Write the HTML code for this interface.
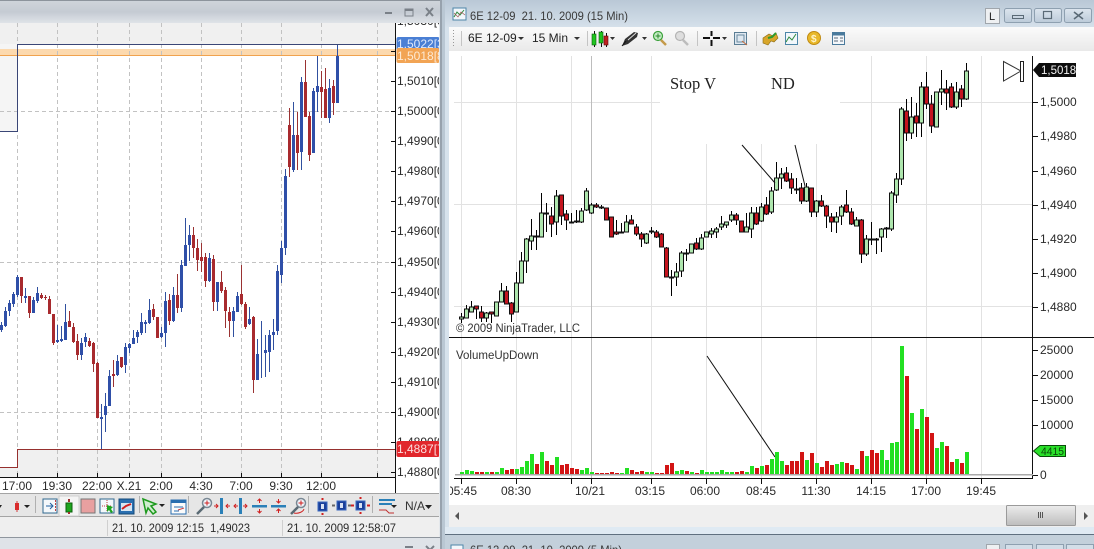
<!DOCTYPE html>
<html>
<head>
<meta charset="utf-8">
<title>Charts</title>
<style>
html,body{margin:0;padding:0;width:1094px;height:549px;overflow:hidden;background:#d6e2ec}
svg{display:block;position:absolute;left:0;top:0}
text{font-family:"Liberation Sans",sans-serif}
</style>
</head>
<body>
<svg width="1094" height="549" viewBox="0 0 1094 549" xmlns="http://www.w3.org/2000/svg">
<defs>
<linearGradient id="t1" x1="0" y1="0" x2="0" y2="1"><stop offset="0" stop-color="#cfd4da"/><stop offset=".5" stop-color="#c5cbd3"/><stop offset="1" stop-color="#dfe3e8"/></linearGradient>
<linearGradient id="t2" x1="0" y1="0" x2="0" y2="1"><stop offset="0" stop-color="#b9c8d6"/><stop offset="1" stop-color="#d5e0ea"/></linearGradient>
<linearGradient id="tb" x1="0" y1="0" x2="0" y2="1"><stop offset="0" stop-color="#fbfbfb"/><stop offset="1" stop-color="#e9e9e9"/></linearGradient>
<linearGradient id="thumb" x1="0" y1="0" x2="0" y2="1"><stop offset="0" stop-color="#ececec"/><stop offset="1" stop-color="#bdbdbd"/></linearGradient>
<linearGradient id="btn" x1="0" y1="0" x2="0" y2="1"><stop offset="0" stop-color="#dce5ee"/><stop offset="1" stop-color="#bccbd9"/></linearGradient>
<clipPath id="lc"><rect x="0" y="23" width="439" height="470"/></clipPath>
<clipPath id="rc"><rect x="450" y="51" width="644" height="454"/></clipPath>
</defs>

<!-- LEFT WINDOW -->
<rect x="0" y="0" width="441" height="549" fill="#e4e8ec"/>
<rect x="0" y="0" width="441" height="1" fill="#8d949c"/>
<rect x="0" y="1" width="441" height="22" fill="url(#t1)"/>
<rect x="0" y="23" width="439" height="470" fill="#fff"/>
<rect x="0" y="23" width="395" height="21" fill="#f0f0f0"/>
<rect x="0" y="44" width="17" height="87" fill="#f5f5f5"/>
<rect x="17" y="449" width="378" height="28" fill="#f0f0f0"/>
<rect x="0" y="467" width="17" height="10" fill="#f0f0f0"/>
<rect x="0" y="49" width="395" height="6" fill="#fcd9ae"/>
<rect x="0" y="55" width="395" height="1" fill="#f0a24e"/>

<path d="M17.5 23V477M57.5 23V477M97.5 23V477M129.5 23V477M161.5 23V477M201.5 23V477M241.5 23V477M281.5 23V477M321.5 23V477M377.5 23V477M0 111.5H395M0 262.5H395M0 412.5H395" stroke="#c2c2c2" stroke-width="1" stroke-dasharray="4 3" fill="none"/>

<path d="M0 131.5H17.5V44.5H395" stroke="#3a4676" stroke-width="1" fill="none"/>
<path d="M0 467.5H17.5V449.5H395" stroke="#96302e" stroke-width="1" fill="none"/>

<!-- left candles wicks -->
<path stroke="#30509f" stroke-width="1" fill="none" d="M1.5 322V332M5.5 307V327M9.5 300V316M13.5 292V307M17.5 275V297M25.5 288V303M33.5 297V313M37.5 287V303M57.5 325V343M61.5 326V342M65.5 304V340M81.5 338V360M85.5 333V347M101.5 404V449M105.5 393V432M109.5 370V406M117.5 355V376M125.5 343V373M129.5 343V353M133.5 330V344M137.5 330V343M141.5 313V335M145.5 320V333M149.5 299V324M161.5 327V338M165.5 292V347M173.5 287V322M181.5 260V312M185.5 218V266M189.5 225V261M209.5 253V282M217.5 282V311M233.5 307V337M237.5 292V312M249.5 307V325M257.5 339V380M261.5 321V378M265.5 335V377M269.5 330V372M273.5 319V350M277.5 265V335M281.5 241V283M285.5 169V255M293.5 102V172M301.5 77V170M313.5 88V153M317.5 56V112M329.5 79V123M337.5 45V103"/>
<path stroke="#9a3232" stroke-width="1" fill="none" d="M21.5 277V303M29.5 296V318M41.5 293V299M45.5 295V300M49.5 296V314M53.5 314V345M69.5 311V327M73.5 323V343M77.5 334V360M89.5 338V347M93.5 342V372M97.5 362V418M113.5 360V387M121.5 357V368M153.5 304V320M157.5 317V338M169.5 294V325M177.5 274V313M193.5 227V258M197.5 239V271M201.5 243V272M205.5 253V287M213.5 255V311M221.5 271V293M225.5 287V328M229.5 307V337M241.5 265V305M245.5 302V329M253.5 316V393M289.5 108V177M297.5 112V170M305.5 60V117M309.5 112V161M321.5 71V118M325.5 68V118M333.5 80V115"/>
<!-- left candle bodies -->
<path stroke="#2f4fa8" stroke-width="3" fill="none" d="M1.5 325V330M5.5 311V326M9.5 303V311M13.5 294V304M17.5 277V295M25.5 296V298M33.5 300V313M37.5 293V301M57.5 340V342M61.5 339V341M65.5 322V340M81.5 343V355M85.5 337V342M101.5 417V419M105.5 406V415M109.5 376V406M117.5 361V375M125.5 347V365M129.5 344V348M133.5 338V344M137.5 332V337M141.5 322V333M145.5 322V324M149.5 310V323M161.5 333V337M165.5 301V333M173.5 295V321M181.5 265V308M185.5 245V266M189.5 235V245M209.5 258V281M217.5 282V302M233.5 311V321M237.5 296V312M249.5 319V324M257.5 354V380M265.5 350V353M269.5 335V352M273.5 332V335M277.5 271V331M281.5 248V275M285.5 176V248M293.5 135V170M301.5 82V152M313.5 91V153M317.5 86V92M329.5 88V118M337.5 56V103"/>
<path stroke="#a82a2e" stroke-width="3" fill="none" d="M21.5 277V296M29.5 296V313M41.5 295V298M45.5 297V298M49.5 299V314M53.5 314V343M69.5 321V327M73.5 327V342M77.5 341V355M89.5 341V346M93.5 343V364M97.5 363V418M113.5 374V376M121.5 357V367M153.5 309V317M157.5 317V338M169.5 300V321M177.5 295V308M193.5 235V248M197.5 248V260M201.5 257V261M205.5 257V281M213.5 259V302M221.5 282V291M225.5 290V311M229.5 312V321M241.5 294V304M245.5 304V327M253.5 317V380M289.5 125V167M297.5 135V153M305.5 82V117M309.5 116V155M321.5 87V92M325.5 89V118M333.5 86V103"/>

<!-- left axis -->
<path d="M395.5 23V493M0 477.5H395" stroke="#111" stroke-width="1" fill="none"/>
<path d="M391 51.5H395M391 81.5H395M391 111.5H395M391 141.5H395M391 171.5H395M391 201.5H395M391 231.5H395M391 262.5H395M391 292.5H395M391 322.5H395M391 352.5H395M391 382.5H395M391 412.5H395M391 442.5H395M391 472.5H395M17.5 473V477M57.5 473V477M97.5 473V477M129.5 473V477M161.5 473V477M201.5 473V477M241.5 473V477M281.5 473V477M321.5 473V477M377.5 473V477" stroke="#111" fill="none"/>
<g clip-path="url(#lc)" font-size="12" fill="#2a2a2a">
<text x="397" y="25">1,5030[0]</text>
<text x="397" y="85">1,5010[0]</text>
<text x="397" y="115">1,5000[0]</text>
<text x="397" y="145">1,4990[0]</text>
<text x="397" y="175">1,4980[0]</text>
<text x="397" y="205">1,4970[0]</text>
<text x="397" y="235">1,4960[0]</text>
<text x="397" y="266">1,4950[0]</text>
<text x="397" y="296">1,4940[0]</text>
<text x="397" y="326">1,4930[0]</text>
<text x="397" y="356">1,4920[0]</text>
<text x="397" y="386">1,4910[0]</text>
<text x="397" y="416">1,4900[0]</text>
<text x="397" y="446">1,4890[0]</text>
<text x="397" y="476">1,4880[0]</text>
<rect x="396.5" y="37" width="43" height="14" rx="2" fill="#4a7fd4"/>
<text x="397" y="48" fill="#dfe9fb">1,5022[3]</text>
<rect x="396.5" y="48" width="43" height="15" rx="2" fill="#f2a454"/>
<text x="397" y="60" fill="#fde9d2">1,5018[8]</text>
<rect x="396.5" y="441" width="43" height="16" rx="2" fill="#e1262b"/>
<text x="397" y="453" fill="#fbdede">1,4887[7]</text>
</g>
<g font-size="12" fill="#2a2a2a" text-anchor="middle">
<text x="17" y="490">17:00</text>
<text x="57" y="490">19:30</text>
<text x="97" y="490">22:00</text>
<text x="129" y="490">X.21</text>
<text x="161" y="490">2:00</text>
<text x="201" y="490">4:30</text>
<text x="241" y="490">7:00</text>
<text x="281" y="490">9:30</text>
<text x="321" y="490">12:00</text>
</g>

<!-- left window title icons -->
<path d="M385 13h7" stroke="#7a8088" stroke-width="2"/>
<rect x="405" y="9" width="8" height="7" fill="none" stroke="#7a8088"/><rect x="405" y="9" width="8" height="2" fill="#7a8088"/>
<path d="M426 8l7 8M433 8l-7 8" stroke="#7a8088" stroke-width="2"/>

<!-- left toolbar -->
<rect x="0" y="493" width="439" height="24" fill="#e6e6e6"/>
<path d="M0 493.5H439M0 516.5H439" stroke="#a4a4a4"/>
<path d="M17 501v11" stroke="#d43a3a" stroke-width="1"/><rect x="15" y="503" width="4" height="7" fill="#d92c2c"/>
<path d="M24 505h6l-3 3zM-2 505h4l-2 3z" fill="#222"/>
<path d="M35.5 496V513" stroke="#b0b0b0"/>
<rect x="43" y="499" width="14" height="14" fill="#f4f8fb" stroke="#30688f"/>
<path d="M46 506h7M50 503l3 3-3 3" stroke="#2060a0" fill="none"/><path d="M55.5 500v12" stroke="#c04040" stroke-dasharray="2 1"/>
<rect x="59" y="496" width="20" height="20" fill="#f4f4f4" stroke="#cfcfcf"/>
<rect x="66" y="503" width="6" height="9" fill="#1ea51e" stroke="#0c600c"/>
<path d="M69 499v3M69 512v2" stroke="#a03030" stroke-width="2"/>
<rect x="81" y="499" width="14" height="14" fill="#e8a0a0" stroke="#777"/>
<rect x="100" y="499" width="14" height="14" fill="#f4f8fb" stroke="#30688f"/>
<path d="M107 500v12M102 506h10" stroke="#c04040" stroke-dasharray="1 1"/>
<path d="M107 505l6 2-2 2 2 3-2 1-2-3-2 2z" fill="#1ea51e"/>
<rect x="119" y="499" width="15" height="15" fill="#2a6fb0" stroke="#144a78"/>
<rect x="121" y="503" width="11" height="8" fill="#d8e6f2"/><path d="M122 509l4-3 5-2" stroke="#d02020" stroke-width="2" fill="none"/>
<path d="M139.5 496V513" stroke="#b0b0b0"/>
<path d="M143 499l13 5-5 2 5 6-3 2-5-6-2 5z" fill="#cfeecf" stroke="#1e9a1e" stroke-width="1.5"/>
<path d="M159 504h6l-3 3z" fill="#222"/>
<rect x="171" y="500" width="15" height="14" fill="#fbfbfb" stroke="#2a6fb0"/>
<rect x="171" y="500" width="15" height="3" fill="#2a6fb0"/>
<path d="M174 507h9M174 511h5" stroke="#2a6fb0"/><path d="M178 510l6-2" stroke="#d04040" fill="none"/>
<path d="M188.5 496V513" stroke="#b0b0b0"/>
<circle cx="207" cy="503" r="4.5" fill="#eef4fa" stroke="#7a8894" stroke-width="1.5"/>
<path d="M204 507l-7 7" stroke="#5a6a74" stroke-width="2.5"/><path d="M204.5 503h5M207 500.5v5" stroke="#d02020"/>
<rect x="220" y="498" width="3" height="16" fill="#2a80b8"/>
<path d="M214 506h4M216 504l2 2-2 2M230 506h-4M228 504l-2 2 2 2" stroke="#d02020" fill="none"/>
<rect x="239" y="498" width="3" height="16" fill="#2a80b8"/>
<path d="M238 506h-4M236 504l-2 2 2 2M243 506h4M245 504l2 2-2 2" stroke="#d02020" fill="none"/>
<rect x="252" y="505" width="15" height="2.5" fill="#2a80b8"/>
<path d="M259.5 499v4M257.5 501l2-2 2 2M259.5 513v-4M257.5 511l2 2 2-2" stroke="#d02020" fill="none"/>
<rect x="271" y="505" width="15" height="2.5" fill="#2a80b8"/>
<path d="M278.5 499v4M276.5 501l2 2 2-2M278.5 513v-4M276.5 511l2-2 2 2" stroke="#d02020" fill="none"/>
<circle cx="301" cy="503" r="4.5" fill="#eef4fa" stroke="#7a8894" stroke-width="1.5"/>
<path d="M298.5 503h5M301 500.5v5" stroke="#d02020"/><path d="M298 507l-7 7" stroke="#5a6a74" stroke-width="2.5"/><path d="M294 513c4 1 9-1 10-4" stroke="#d02020" fill="none"/>
<path d="M308.5 496V513" stroke="#b0b0b0"/>
<rect x="318" y="502" width="9" height="9" fill="#1a3f9a" stroke="#3a68c0"/><rect x="321" y="504" width="3" height="5" fill="#d8e2f4"/>
<path d="M322.5 498v2M322.5 513v2" stroke="#d02020" stroke-width="2"/>
<rect x="337" y="501" width="9" height="9" fill="#1a3f9a" stroke="#3a68c0"/><rect x="340" y="503" width="3" height="5" fill="#d8e2f4"/>
<path d="M332 505.5h3M348 505.5h3" stroke="#666" stroke-width="2"/>
<rect x="356" y="501" width="9" height="9" fill="#1a3f9a" stroke="#3a68c0"/><rect x="359" y="503" width="3" height="5" fill="#d8e2f4"/>
<path d="M351 505.5h3M367 505.5h3" stroke="#d02020" stroke-width="2"/><path d="M360.5 497v2M360.5 512v2" stroke="#d02020" stroke-width="2"/>
<path d="M372.5 496V513" stroke="#b0b0b0"/>
<path d="M379 500h16M379 504h13" stroke="#2a80b8" stroke-width="2"/><path d="M379 510h7l3 3h5" stroke="#c03030" fill="none"/>
<path d="M391 505h6l-3 3z" fill="#222"/>
<text x="405" y="510" font-size="12" fill="#333">N/A</text>
<path d="M425 505h7l-3.5 4z" fill="#222"/>

<!-- left status -->
<rect x="0" y="517" width="439" height="20" fill="#efefef"/>
<path d="M107.5 520V536M282.5 520V536" stroke="#cfcfcf"/>
<text x="112" y="532" font-size="12" fill="#2a2a2a" xml:space="preserve" textLength="138" lengthAdjust="spacingAndGlyphs">21. 10. 2009 12:15  1,49023</text>
<text x="287" y="532" font-size="12" fill="#2a2a2a" textLength="109" lengthAdjust="spacingAndGlyphs">21. 10. 2009 12:58:07</text>
<rect x="0" y="537" width="441" height="1" fill="#8f969e"/>
<rect x="0" y="538" width="441" height="11" fill="#dfe3e8"/>
<path d="M405 547h8" stroke="#7a8088" stroke-width="2"/>
<path d="M426 546l8 8M434 546l-8 8" stroke="#7a8088" stroke-width="2"/>

<!-- gutter -->
<rect x="440" y="0" width="2" height="549" fill="#97a2ad"/>
<rect x="442" y="0" width="3" height="549" fill="#b9c7d3"/>

<!-- RIGHT WINDOW -->
<rect x="445" y="0" width="649" height="549" fill="#d6e2ec"/>
<rect x="445" y="0" width="649" height="27" fill="url(#t2)"/>
<rect x="453" y="8" width="13" height="12" fill="#f2f7fb" stroke="#4d86a8"/>
<path d="M454 17l3-5 3 3 4-5" stroke="#2d8a3d" fill="none"/><path d="M454 13l4 4 3-5 4 3" stroke="#a04a4a" fill="none" stroke-width=".6"/>
<text x="470" y="20" font-size="12" fill="#3a3a3a" xml:space="preserve" textLength="158" lengthAdjust="spacingAndGlyphs">6E 12-09  21. 10. 2009 (15 Min)</text>

<rect x="985.5" y="8.5" width="14" height="15" fill="#eef0f2" stroke="#a0a6ac"/>
<text x="989" y="20" font-size="11" fill="#222">L</text>
<rect x="1004.5" y="8.5" width="27" height="14" rx="2" fill="url(#btn)" stroke="#8ea0b0"/>
<rect x="1012.5" y="15.5" width="11" height="3" fill="none" stroke="#5a6a76"/>
<rect x="1034.5" y="8.5" width="27" height="14" rx="2" fill="url(#btn)" stroke="#8ea0b0"/>
<rect x="1043.5" y="11.5" width="8" height="7" fill="none" stroke="#5a6a76" stroke-width="1.2"/>
<rect x="1064.5" y="8.5" width="27" height="14" rx="2" fill="url(#btn)" stroke="#8ea0b0"/>
<path d="M1074 12l9 7M1083 12l-9 7" stroke="#5a6a76" stroke-width="1.6"/>

<rect x="449" y="27" width="645" height="24" fill="url(#tb)"/>
<path d="M453.5 30V48" stroke="#999" stroke-dasharray="1 2"/>
<path d="M461.5 31V46M587.5 31V46M697.5 31V46M756.5 31V46" stroke="#c4c4c4"/>
<text x="468" y="42" font-size="12" fill="#222">6E 12-09</text>
<path d="M518 37h6l-3 3z" fill="#333"/>
<text x="532" y="42" font-size="12" fill="#222">15 Min</text>
<path d="M574 37h6l-3 3z" fill="#333"/>
<path d="M594.5 31V47M601.5 31V47M606.5 33V47" stroke="#111"/>
<rect x="592" y="34" width="4" height="11" fill="#1fc41f" stroke="#0a5a0a" stroke-width=".6"/>
<rect x="599" y="32" width="4" height="11" fill="#1fc41f" stroke="#0a5a0a" stroke-width=".6"/>
<rect x="604" y="36" width="4" height="9" fill="#c02020" stroke="#5a0a0a" stroke-width=".6"/>
<path d="M610 37h5l-2.5 3z" fill="#333"/>
<path d="M622 46l3-7 9-7 4 1-1 4-9 7z" fill="#333"/><path d="M622 46l4-5" stroke="#111"/><path d="M636 33l-8 7" stroke="#ddd"/>
<path d="M642 37h5l-2.5 3z" fill="#333"/>
<circle cx="658" cy="36" r="4.5" fill="#c6ecc6" stroke="#3aa03a" stroke-width="1.2"/>
<path d="M655.5 36h5M658 33.5v5" stroke="#2a8a2a"/><path d="M661 40l5 5" stroke="#c49a4a" stroke-width="2.5"/>
<circle cx="680" cy="36" r="4.5" fill="#dedede" stroke="#b4b4b4" stroke-width="1.2"/>
<path d="M683 40l5 5" stroke="#bcbcbc" stroke-width="2.5"/>
<path d="M703 38h7M713 38h7M711.5 31v5M711.5 40v6" stroke="#111" stroke-width="2"/>
<path d="M722 37h5l-2.5 3z" fill="#333"/>
<rect x="734.5" y="32.5" width="12" height="12" fill="#dfe8f0" stroke="#5a7d94"/><rect x="737" y="35" width="7" height="7" fill="none" stroke="#6a8aa0"/><path d="M742 41l5 4" stroke="#c46a3a"/>
<path d="M763 38l6-4 4 2 3-3 2 5-4 4-3-1-3 4-5-2z" fill="#d8a62a" stroke="#8a6a14" stroke-width=".6"/><path d="M768 38l4-1 4-4" stroke="#2e9a2e" stroke-width="2" fill="none"/>
<rect x="785.5" y="32.5" width="12" height="12" fill="#f2f7fb" stroke="#4d86a8"/>
<path d="M786 42l3-5 3 3 4-6" stroke="#2d8a3d" fill="none"/>
<circle cx="814" cy="38" r="6.5" fill="#e8b82a" stroke="#c08a12"/><text x="811" y="42" font-size="10" font-weight="bold" fill="#fff3c8">$</text>
<rect x="832.5" y="32.5" width="12" height="12" fill="#f4f7fa" stroke="#4a7a9c"/><rect x="832.5" y="32.5" width="12" height="3" fill="#4a7a9c"/><path d="M834 38h4M840 38h3M834 41h4M840 41h3" stroke="#5a6a7a"/>

<!-- chart area -->
<rect x="449" y="51" width="645" height="454" fill="#fff"/>
<path d="M461.5 56V478M516.5 56V478M571.5 56V478M651.5 56V478M706.5 56V478M761.5 56V478M816.5 56V478M871.5 56V478M926.5 56V478M981.5 56V478M454 102.5H1032M454 204.5H1032M454 306.5H1032" stroke="#e2e2e2" fill="none"/>
<path d="M591.5 56V478" stroke="#bdbdbd"/>
<rect x="660" y="51" width="180" height="93" fill="#fff"/>

<!-- right candles wicks -->
<path stroke="#000" stroke-width="1" fill="none" d="M461.5 313V323M466.5 305V318M471.5 301V312M476.5 306V319M481.5 306V322M486.5 312V322M491.5 312V323M496.5 302V316M501.5 283V302M506.5 286V304M511.5 302V322M516.5 272V312M521.5 252V283M526.5 238V273M531.5 219V250M536.5 230V250M541.5 193V237M546.5 203V232M551.5 207V237M556.5 190V235M561.5 195V225M566.5 210V230M571.5 213V223M576.5 210V223M581.5 208V223M586.5 188V211M591.5 203V214M596.5 203V208M601.5 205V209M606.5 208V220M611.5 217V237M616.5 220V235M621.5 223V233M626.5 215V232M631.5 215V224M636.5 224V236M641.5 232V247M646.5 233V244M651.5 227V234M656.5 230V238M661.5 233V247M666.5 247V277M671.5 270V296M676.5 263V286M681.5 251V277M686.5 249V261M691.5 244V253M696.5 238V250M701.5 234V250M706.5 232V237M711.5 228V238M716.5 227V238M721.5 216V230M726.5 222V228M731.5 211V222M736.5 213V225M741.5 221V232M746.5 213V232M751.5 207V238M756.5 207V225M761.5 203V222M766.5 197V215M771.5 187V214M776.5 162V191M781.5 168V189M786.5 167V182M791.5 173V194M796.5 178V194M801.5 183V204M806.5 183V202M811.5 188V217M816.5 200V217M821.5 195V207M826.5 205V228M831.5 213V232M836.5 212V233M841.5 205V225M846.5 190V213M851.5 208V225M856.5 217V226M861.5 219V263M866.5 235V256M871.5 222V245M876.5 238V254M881.5 228V252M886.5 227V238M891.5 191V231M896.5 173V203M901.5 107V185M906.5 99V141M911.5 97V139M916.5 103V137M921.5 82V137M926.5 72V109M931.5 95V133M936.5 92V127M941.5 70V105M946.5 80V110M951.5 83V108M956.5 82V109M961.5 85V107M966.5 63V100"/>
<!-- right green bodies -->
<path fill="#aee6ae" stroke="#111" stroke-width="1" d="M459.5 317h4v2h-4zM464.5 309h4v9h-4zM469.5 307h4v5h-4zM484.5 313h4v5h-4zM494.5 302h4v14h-4zM499.5 291h4v11h-4zM514.5 283h4v29h-4zM519.5 261h4v22h-4zM524.5 239h4v22h-4zM529.5 236h4v5h-4zM534.5 236h4v1h-4zM539.5 213h4v24h-4zM544.5 213h4v1h-4zM554.5 196h4v26h-4zM579.5 211h4v11h-4zM584.5 191h4v19h-4zM589.5 205h4v8h-4zM624.5 222h4v10h-4zM644.5 234h4v9h-4zM674.5 272h4v5h-4zM679.5 253h4v18h-4zM684.5 253h4v1h-4zM689.5 244h4v9h-4zM699.5 238h4v11h-4zM704.5 232h4v5h-4zM709.5 231h4v3h-4zM714.5 229h4v3h-4zM719.5 224h4v3h-4zM724.5 222h4v3h-4zM729.5 215h4v5h-4zM744.5 227h4v5h-4zM749.5 213h4v16h-4zM759.5 207h4v14h-4zM769.5 191h4v21h-4zM774.5 178h4v12h-4zM779.5 174h4v4h-4zM804.5 187h4v14h-4zM814.5 201h4v11h-4zM834.5 217h4v5h-4zM839.5 207h4v9h-4zM854.5 220h4v6h-4zM864.5 239h4v15h-4zM869.5 239h4v1h-4zM874.5 239h4v1h-4zM879.5 229h4v8h-4zM884.5 228h4v1h-4zM889.5 193h4v36h-4zM894.5 179h4v16h-4zM899.5 109h4v70h-4zM909.5 117h4v16h-4zM919.5 87h4v36h-4zM934.5 92h4v35h-4zM939.5 89h4v3h-4zM954.5 92h4v15h-4zM964.5 71h4v28h-4z"/>
<!-- right red bodies -->
<path fill="#c4141e" stroke="#111" stroke-width="1" d="M474.5 306h4v3h-4zM479.5 312h4v6h-4zM489.5 312h4v2h-4zM504.5 291h4v13h-4zM509.5 303h4v11h-4zM549.5 216h4v8h-4zM559.5 195h4v21h-4zM564.5 214h4v6h-4zM569.5 222h4v1h-4zM574.5 221h4v1h-4zM594.5 205h4v2h-4zM599.5 207h4v1h-4zM604.5 208h4v12h-4zM609.5 217h4v20h-4zM614.5 232h4v2h-4zM619.5 232h4v1h-4zM629.5 220h4v4h-4zM634.5 227h4v7h-4zM639.5 234h4v5h-4zM649.5 231h4v1h-4zM654.5 232h4v5h-4zM659.5 234h4v13h-4zM664.5 248h4v29h-4zM669.5 277h4v1h-4zM694.5 243h4v6h-4zM734.5 215h4v5h-4zM739.5 221h4v11h-4zM754.5 213h4v11h-4zM764.5 205h4v9h-4zM784.5 173h4v8h-4zM789.5 179h4v9h-4zM794.5 189h4v1h-4zM799.5 188h4v13h-4zM809.5 188h4v24h-4zM819.5 201h4v5h-4zM824.5 206h4v10h-4zM829.5 217h4v5h-4zM844.5 205h4v7h-4zM849.5 212h4v12h-4zM859.5 220h4v34h-4zM904.5 111h4v22h-4zM914.5 116h4v7h-4zM924.5 87h4v17h-4zM929.5 104h4v22h-4zM944.5 89h4v4h-4zM949.5 87h4v20h-4zM959.5 89h4v10h-4z"/>

<!-- annotations -->
<path d="M742 145L775 183M795 145L805 186M707 356L775 457" stroke="#111" stroke-width="1" fill="none"/>
<text x="670" y="89" font-size="16.5" fill="#222" style="font-family:'Liberation Serif',serif">Stop V</text>
<text x="771" y="89" font-size="16.5" fill="#222" style="font-family:'Liberation Serif',serif">ND</text>
<path d="M1003.5 61.5L1021 71L1003.5 81Z" fill="none" stroke="#333" stroke-width="1"/>
<rect x="1020.5" y="61.5" width="3" height="20" fill="#fff" stroke="#222"/>

<text x="456" y="332" font-size="11.5" fill="#333" textLength="124" lengthAdjust="spacingAndGlyphs">© 2009 NinjaTrader, LLC</text>

<!-- separators / axes -->
<rect x="449" y="337" width="645" height="1" fill="#111"/>
<path d="M1032.5 56V478M454 478.5H1033" stroke="#111" fill="none"/>
<path d="M1033 102.5h5M1033 136.5h5M1033 171.5h5M1033 205.5h5M1033 239.5h5M1033 273.5h5M1033 307.5h5M1033 350.5h5M1033 375.5h5M1033 400.5h5M1033 425.5h5M1033 475.5h5M461.5 478v6M516.5 478v6M571.5 478v6M591.5 478v6M651.5 478v6M706.5 478v6M761.5 478v6M816.5 478v6M871.5 478v6M926.5 478v6M981.5 478v6" stroke="#111" fill="none"/>
<rect x="455" y="474" width="578" height="1.5" fill="#aaaaaa"/>
<text x="456" y="359" font-size="11.5" fill="#333">VolumeUpDown</text>

<!-- volume bars -->
<path fill="none" stroke="#22e022" stroke-width="4" d="M462 474v-2M467 474v-4M472 474v-3M487 474v-2M497 474v-2M502 474v-6M517 474v-5M522 474v-7M527 474v-13M532 474v-20M542 474v-22M557 474v-17M582 474v-4M587 474v-6M592 474v-2M622 474v-1M627 474v-6M647 474v-2M652 474v-2M677 474v-3M682 474v-4M692 474v-2M702 474v-4M707 474v-2M712 474v-2M717 474v-2M722 474v-4M727 474v-2M732 474v-2M747 474v-2M752 474v-8M762 474v-8M772 474v-15M777 474v-22M782 474v-13M807 474v-14M817 474v-11M837 474v-10M842 474v-12M857 474v-5M867 474v-18M882 474v-24M887 474v-14M892 474v-31M897 474v-32M902 474v-128M912 474v-61M922 474v-65M937 474v-26M942 474v-32M957 474v-15M967 474v-22"/>
<path fill="none" stroke="#d21414" stroke-width="4" d="M477 474v-2M482 474v-2M492 474v-2M507 474v-4M512 474v-5M537 474v-10M547 474v-13M552 474v-9M562 474v-9M567 474v-10M572 474v-6M577 474v-5M597 474v-1M602 474v-1M607 474v-1M612 474v-2M617 474v-1M632 474v-4M637 474v-2M642 474v-3M657 474v-1M662 474v-1M667 474v-9M672 474v-11M687 474v-3M697 474v-1M737 474v-2M742 474v-3M757 474v-6M767 474v-9M787 474v-9M792 474v-13M797 474v-13M802 474v-22M812 474v-21M822 474v-7M827 474v-13M832 474v-9M847 474v-11M852 474v-9M862 474v-23M872 474v-24M877 474v-21M907 474v-98M917 474v-45M927 474v-57M932 474v-41M947 474v-28M952 474v-12M962 474v-11"/>

<!-- right axis labels -->
<g font-size="12" fill="#2a2a2a">
<text x="1040" y="106">1,5000</text>
<text x="1040" y="140">1,4980</text>
<text x="1040" y="175">1,4960</text>
<text x="1040" y="209">1,4940</text>
<text x="1040" y="243">1,4920</text>
<text x="1040" y="277">1,4900</text>
<text x="1040" y="311">1,4880</text>
<text x="1040" y="354">25000</text>
<text x="1040" y="379">20000</text>
<text x="1040" y="404">15000</text>
<text x="1040" y="429">10000</text>
<text x="1040" y="479">0</text>
</g>
<path d="M1033 70L1039 63H1076V77H1039Z" fill="#0c0c0c"/>
<text x="1041" y="74" font-size="11.5" fill="#f4f4f4">1,5018</text>
<path d="M1033.5 451L1040 445.5H1065.5V456.5H1040Z" fill="#2ae02a" stroke="#0a4a0a"/>
<text x="1041" y="455" font-size="11" fill="#0a4a0a" textLength="23" lengthAdjust="spacingAndGlyphs">4415</text>

<g clip-path="url(#rc)" font-size="12" fill="#2a2a2a" text-anchor="middle">
<text x="462" y="495">05:45</text>
<text x="516" y="495">08:30</text>
<text x="590" y="495">10/21</text>
<text x="650" y="495">03:15</text>
<text x="705" y="495">06:00</text>
<text x="761" y="495">08:45</text>
<text x="816" y="495">11:30</text>
<text x="871" y="495">14:15</text>
<text x="926" y="495">17:00</text>
<text x="981" y="495">19:45</text>
</g>

<!-- scroll -->
<rect x="449" y="505" width="645" height="22" fill="#efefef"/>
<path d="M459 512v8l-4-4z" fill="#555"/>
<path d="M1084 512v8l4-4z" fill="#555"/>
<rect x="1006.5" y="505.5" width="69" height="20" rx="1" fill="url(#thumb)" stroke="#9a9a9a"/>
<path d="M1038.5 512v6M1040.5 512v6M1042.5 512v6" stroke="#555"/>
<rect x="445" y="527" width="649" height="7" fill="#dfeaf3"/>
<rect x="445" y="534" width="649" height="1" fill="#5f7080"/>
<rect x="445" y="535" width="649" height="14" fill="#c3d0db"/>
<rect x="451" y="545" width="12" height="10" fill="#f2f7fb" stroke="#4d86a8"/>
<text x="470" y="554" font-size="12" fill="#3a3a3a" xml:space="preserve" textLength="152" lengthAdjust="spacingAndGlyphs">6E 12-09  21. 10. 2009 (5 Min)</text>
<rect x="986.5" y="544.5" width="13" height="10" fill="#eef0f2" stroke="#a0a6ac"/>
<rect x="1005.5" y="544.5" width="27" height="10" fill="#d3dee8" stroke="#8ea0b0"/>
<rect x="1036.5" y="544.5" width="27" height="10" fill="#d3dee8" stroke="#8ea0b0"/>
<rect x="1066.5" y="544.5" width="27" height="10" fill="#d3dee8" stroke="#8ea0b0"/>
</svg>
</body>
</html>
